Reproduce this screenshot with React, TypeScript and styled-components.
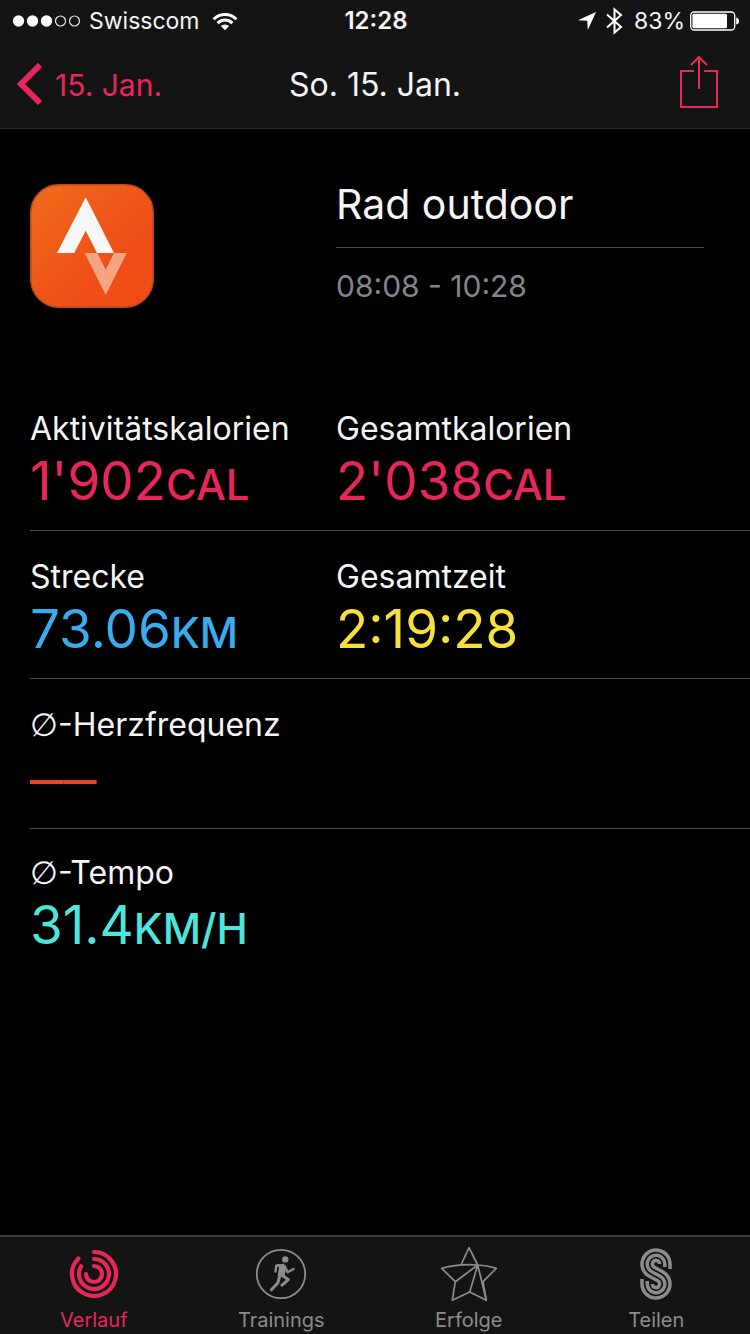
import React from "react";
import styled, { createGlobalStyle } from "styled-components";

const PINK = "#e8265a";
const GREY = "#8c8c8c";

const GlobalStyle = createGlobalStyle`
  *, *::before, *::after { box-sizing: border-box; }
  body {
    margin: 0;
    background: #000;
    color: #f5f5f5;
    font-family: Inter, Roboto, "Liberation Sans", sans-serif;
  }
`;

const Screen = styled.div`
  display: flex;
  flex-direction: column;
  min-height: 100vh;
`;

const Header = styled.header`
  background: #141414;
  border-bottom: 1px solid #2c2c2e;
`;

const StatusBar = styled.div`
  display: grid;
  grid-template-columns: 1fr auto 1fr;
  align-items: center;
  height: 42px;
  padding: 0 10px 0 12px;
  font-size: 23px;
  line-height: 42px;
`;

const StatusGroup = styled.div<{ $end?: boolean }>`
  display: flex;
  align-items: center;
  gap: ${(p) => (p.$end ? 5 : 8)}px;
  justify-content: ${(p) => (p.$end ? "flex-end" : "flex-start")};
`;

const Clock = styled.time`
  font-weight: 600;
  font-size: 24px;
`;

const NavBar = styled.nav`
  display: grid;
  grid-template-columns: 1fr auto 1fr;
  align-items: center;
  height: 86px;
  padding: 0 16px;
`;

const NavButton = styled.button<{ $end?: boolean }>`
  display: flex;
  align-items: center;
  gap: 12px;
  justify-self: ${(p) => (p.$end ? "end" : "start")};
  padding: 0 ${(p) => (p.$end ? 15 : 0)}px 0 0;
  border: 0;
  background: none;
  color: ${PINK};
  font: inherit;
  font-size: 30px;
  line-height: 40px;
  cursor: pointer;
`;

const NavTitle = styled.h1`
  margin: 0;
  font-size: 32px;
  line-height: 40px;
  font-weight: 400;
`;

const Main = styled.main`
  flex: 1;
  padding: 55px 0 40px 30px;
`;

const Hero = styled.section`
  display: grid;
  grid-template-columns: 17fr 23fr;
  height: 199px;
`;

const HeroText = styled.div`
  padding-right: 46px;
`;

const WorkoutName = styled.h2`
  margin: 0;
  padding-bottom: 23px;
  border-bottom: 1px solid #48484a;
  font-size: 41px;
  line-height: 40px;
  font-weight: 400;
`;

const WorkoutTime = styled.p`
  margin: 0;
  padding-top: 18px;
  color: #85858a;
  font-size: 30px;
  line-height: 40px;
`;

const MetricRow = styled.dl<{ $top?: number; $bottom?: number; $last?: boolean }>`
  display: grid;
  grid-template-columns: 17fr 23fr;
  margin: 0;
  padding: ${(p) => p.$top ?? 26}px 0 ${(p) => p.$bottom ?? 17}px;
  border-bottom: ${(p) => (p.$last ? "0" : "1px solid #48484a")};
`;

const MetricLabel = styled.dt`
  font-size: 32px;
  line-height: 40px;
  white-space: nowrap;
`;

const AverageSign = styled.span`
  font-family: "DejaVu Sans", sans-serif;
  font-weight: 200;
  line-height: 1;
`;

const MetricValue = styled.dd<{ $color: string }>`
  margin: 0;
  height: 64px;
  color: ${(p) => p.$color};
  font-size: 53px;
  line-height: 64px;
  white-space: nowrap;
`;

const Unit = styled.span`
  font-size: 42px;
  font-weight: 500;
  line-height: 1;
`;

const NoReading = styled.span`
  display: block;
  font-family: "Liberation Sans", sans-serif;
  font-size: 60px;
  line-height: 64px;
`;

const TabBar = styled.nav`
  position: sticky;
  bottom: 0;
  display: grid;
  grid-template-columns: repeat(4, 1fr);
  height: 99px;
  background: #141414;
  border-top: 2px solid #3a3a3c;
`;

const Tab = styled.a<{ $active?: boolean }>`
  display: flex;
  flex-direction: column;
  align-items: center;
  gap: 6px;
  padding-top: 9px;
  color: ${(p) => (p.$active ? PINK : GREY)};
  font-size: 20px;
  line-height: 24px;
  text-decoration: none;
`;

const SignalDots = () => (
  <svg width="69" height="14" viewBox="0 0 69 14" aria-hidden="true">
    {[0, 1, 2, 3, 4].map((i) => (
      <circle
        key={i}
        cx={6.5 + i * 14}
        cy="7"
        r={i < 3 ? 5.7 : 5}
        fill={i < 3 ? "#fff" : "none"}
        stroke={i < 3 ? "none" : "#e8e8e8"}
        strokeWidth="1.2"
      />
    ))}
  </svg>
);

const WifiIcon = () => (
  <svg width="34" height="19" viewBox="-4 0 34 19" fill="none" stroke="#fff" strokeWidth="3" aria-hidden="true">
    <path d="M1.6 7.2 A16.2 16.2 0 0 1 24.4 7.2" />
    <path d="M5.6 11.1 A10.5 10.5 0 0 1 20.4 11.1" />
    <path d="M13 18.2 L8.9 14.1 A5.8 5.8 0 0 1 17.1 14.1 Z" fill="#fff" stroke="none" />
  </svg>
);

const LocationIcon = () => (
  <svg width="24" height="20" viewBox="0 0 24 20" fill="#fff" aria-hidden="true">
    <path d="M19 1 L10.8 19 L10.3 9.8 L1 9.3 Z" />
  </svg>
);

const BluetoothIcon = () => (
  <svg width="23" height="28" viewBox="0 0 23 28" fill="none" stroke="#fff" strokeWidth="2" aria-hidden="true">
    <path d="M1 7.5 L15 20 L8.5 25.6 V2.4 L15 8 L1 20.5" />
  </svg>
);

const BatteryIcon = () => (
  <svg width="50" height="20" viewBox="0 0 50 20" aria-hidden="true">
    <rect x="0.7" y="1" width="44" height="18" rx="3.5" fill="none" stroke="#fff" strokeWidth="1.3" />
    <rect x="2.4" y="2.8" width="34.6" height="14.4" rx="1.5" fill="#fff" />
    <path d="M46.2 6.5 Q49 7 49 10 Q49 13 46.2 13.5 Z" fill="#fff" />
  </svg>
);

const BackIcon = () => (
  <svg width="27" height="44" viewBox="0 0 27 44" fill="none" stroke={PINK} strokeWidth="6" aria-hidden="true">
    <path d="M24 2 L5 21 L24 40" />
  </svg>
);

const ShareIcon = () => (
  <svg width="40" height="60" viewBox="0 0 40 60" fill="none" stroke={PINK} strokeWidth="2" aria-hidden="true">
    <path d="M15 16 H2 V52 H38 V16 H25" />
    <path d="M20 34 V2 M12 10 L20 2 L28 10" />
  </svg>
);

const AppIcon = () => (
  <svg width="124" height="124" viewBox="0 0 124 124" role="img" aria-label="Strava">
    <defs>
      <linearGradient id="appFill" x1="0" y1="0" x2="0.7" y2="0.7">
        <stop offset="0" stopColor="#f06c1c" />
        <stop offset="1" stopColor="#ef4c16" />
      </linearGradient>
    </defs>
    <rect x="0.75" y="0.75" width="122.5" height="122.5" rx="28" fill="url(#appFill)" stroke="#b8481c" strokeWidth="1.5" />
    <path d="M55.7 13.3 L84 69 H67 L55.7 46.7 L44.3 69 H27 Z" fill="#f7f7f7" />
    <path d="M54.7 69 H67.3 L75.7 85.7 L84 69 H96.7 L75.7 111 Z" fill="#f6a582" />
  </svg>
);

const ringArc = (r: number, degrees: number) => {
  const a = (degrees * Math.PI) / 180;
  return `M26 ${26 - r} A${r} ${r} 0 1 1 ${26 + r * Math.sin(a)} ${26 - r * Math.cos(a)}`;
};

const RingsIcon = () => (
  <svg width="52" height="56" viewBox="0 -2 52 56" fill="none" stroke="currentColor" strokeWidth="4.2" strokeLinecap="round" aria-hidden="true">
    <path d={ringArc(22, 315)} />
    <path d={ringArc(15, 301)} />
    <path d={ringArc(8, 270)} />
  </svg>
);

const RunnerIcon = () => (
  <svg width="52" height="56" viewBox="0 -2 52 56" fill="none" stroke="currentColor" strokeLinecap="round" strokeLinejoin="round" aria-hidden="true">
    <circle cx="26" cy="26" r="24.2" strokeWidth="1.8" />
    <circle cx="30.3" cy="11.4" r="3.2" fill="currentColor" stroke="none" />
    <path d="M22.5 17 L28.5 16.6 L30.2 19 L29 27.5 L23.5 27 L25 18.5 Z" fill="currentColor" strokeWidth="1.6" />
    <path d="M25 17.2 L21.3 17.6 L20.4 23.5" strokeWidth="2.4" />
    <path d="M29.8 18.5 L32.6 24.2 L38.6 21" strokeWidth="2.4" />
    <path d="M26.5 27 L33.4 31.6 L27 37.2" strokeWidth="3" />
    <path d="M24.8 27.5 L22.8 35 L16.4 41.8" strokeWidth="3" />
  </svg>
);

const StarIcon = () => (
  <svg width="60" height="56" viewBox="0 1 60 56" fill="none" stroke="currentColor" strokeWidth="1.7" strokeLinejoin="round" aria-hidden="true">
    <path d="M22 20 L30 2.7 L38.7 20 Q48 20.5 57.3 23.3 L44 36.7 L47.3 55.3 L30.7 47 L13.3 55.3 L16.3 36.7 L2.7 23.3 Q20 18.5 38.7 20" />
    <path d="M16.3 36.7 L38.7 20 L30.7 47 M38.7 20 L47.3 55.3" />
  </svg>
);

// One strand of the S: radius `top` round the upper bowl, `low` round the lower one.
const strand = (top: number, low: number, tailTop: number, tailLow: number) =>
  `M${17 + top} ${17 + tailTop} V17 A${top} ${top} 0 1 0 ${17 - 0.475 * top} ${17 + 0.88 * top} ` +
  `L${17 + 0.475 * low} ${37 - 0.88 * low} A${low} ${low} 0 1 1 ${17 - low} 37 V${37 - tailLow}`;

const SharingIcon = () => (
  <svg width="34" height="56" viewBox="0 -1 34 56" fill="none" stroke="currentColor" strokeWidth="3.5" aria-hidden="true">
    <path d={strand(14, 3.6, 5, 0)} />
    <path d={strand(8.8, 8.8, 3, 3)} />
    <path d={strand(3.6, 14, 0, 5)} />
  </svg>
);

type MetricProps = {
  label: string;
  average?: boolean;
  value?: string;
  unit?: string;
  color: string;
};

const Metric = ({ label, average, value, unit, color }: MetricProps) => (
  <div>
    <MetricLabel>
      {average && <AverageSign>∅</AverageSign>}
      {label}
    </MetricLabel>
    <MetricValue $color={color}>
      {value ?? <NoReading>––</NoReading>}
      {unit && <Unit>{unit}</Unit>}
    </MetricValue>
  </div>
);

export default function App() {
  return (
    <Screen>
      <GlobalStyle />
      <Header>
        <StatusBar>
          <StatusGroup>
            <SignalDots />
            <span>Swisscom</span>
            <WifiIcon />
          </StatusGroup>
          <Clock>12:28</Clock>
          <StatusGroup $end>
            <LocationIcon />
            <BluetoothIcon />
            <span>83%</span>
            <BatteryIcon />
          </StatusGroup>
        </StatusBar>
        <NavBar aria-label="Navigation">
          <NavButton type="button">
            <BackIcon />
            15. Jan.
          </NavButton>
          <NavTitle>So. 15. Jan.</NavTitle>
          <NavButton type="button" $end aria-label="Teilen">
            <ShareIcon />
          </NavButton>
        </NavBar>
      </Header>

      <Main>
        <Hero>
          <AppIcon />
          <HeroText>
            <WorkoutName>Rad outdoor</WorkoutName>
            <WorkoutTime>08:08 - 10:28</WorkoutTime>
          </HeroText>
        </Hero>
        <MetricRow>
          <Metric label="Aktivitätskalorien" value="1'902" unit="CAL" color={PINK} />
          <Metric label="Gesamtkalorien" value="2'038" unit="CAL" color={PINK} />
        </MetricRow>
        <MetricRow>
          <Metric label="Strecke" value="73.06" unit="KM" color="#38acec" />
          <Metric label="Gesamtzeit" value="2:19:28" color="#f7e03c" />
        </MetricRow>
        <MetricRow $bottom={19}>
          <Metric average label="-Herzfrequenz" color="#e6452b" />
        </MetricRow>
        <MetricRow $top={24} $last>
          <Metric average label="-Tempo" value="31.4" unit="KM/H" color="#4be6dd" />
        </MetricRow>
      </Main>

      <TabBar aria-label="Bereiche">
        <Tab href="#verlauf" $active aria-current="page">
          <RingsIcon />
          Verlauf
        </Tab>
        <Tab href="#trainings">
          <RunnerIcon />
          Trainings
        </Tab>
        <Tab href="#erfolge">
          <StarIcon />
          Erfolge
        </Tab>
        <Tab href="#teilen">
          <SharingIcon />
          Teilen
        </Tab>
      </TabBar>
    </Screen>
  );
}
